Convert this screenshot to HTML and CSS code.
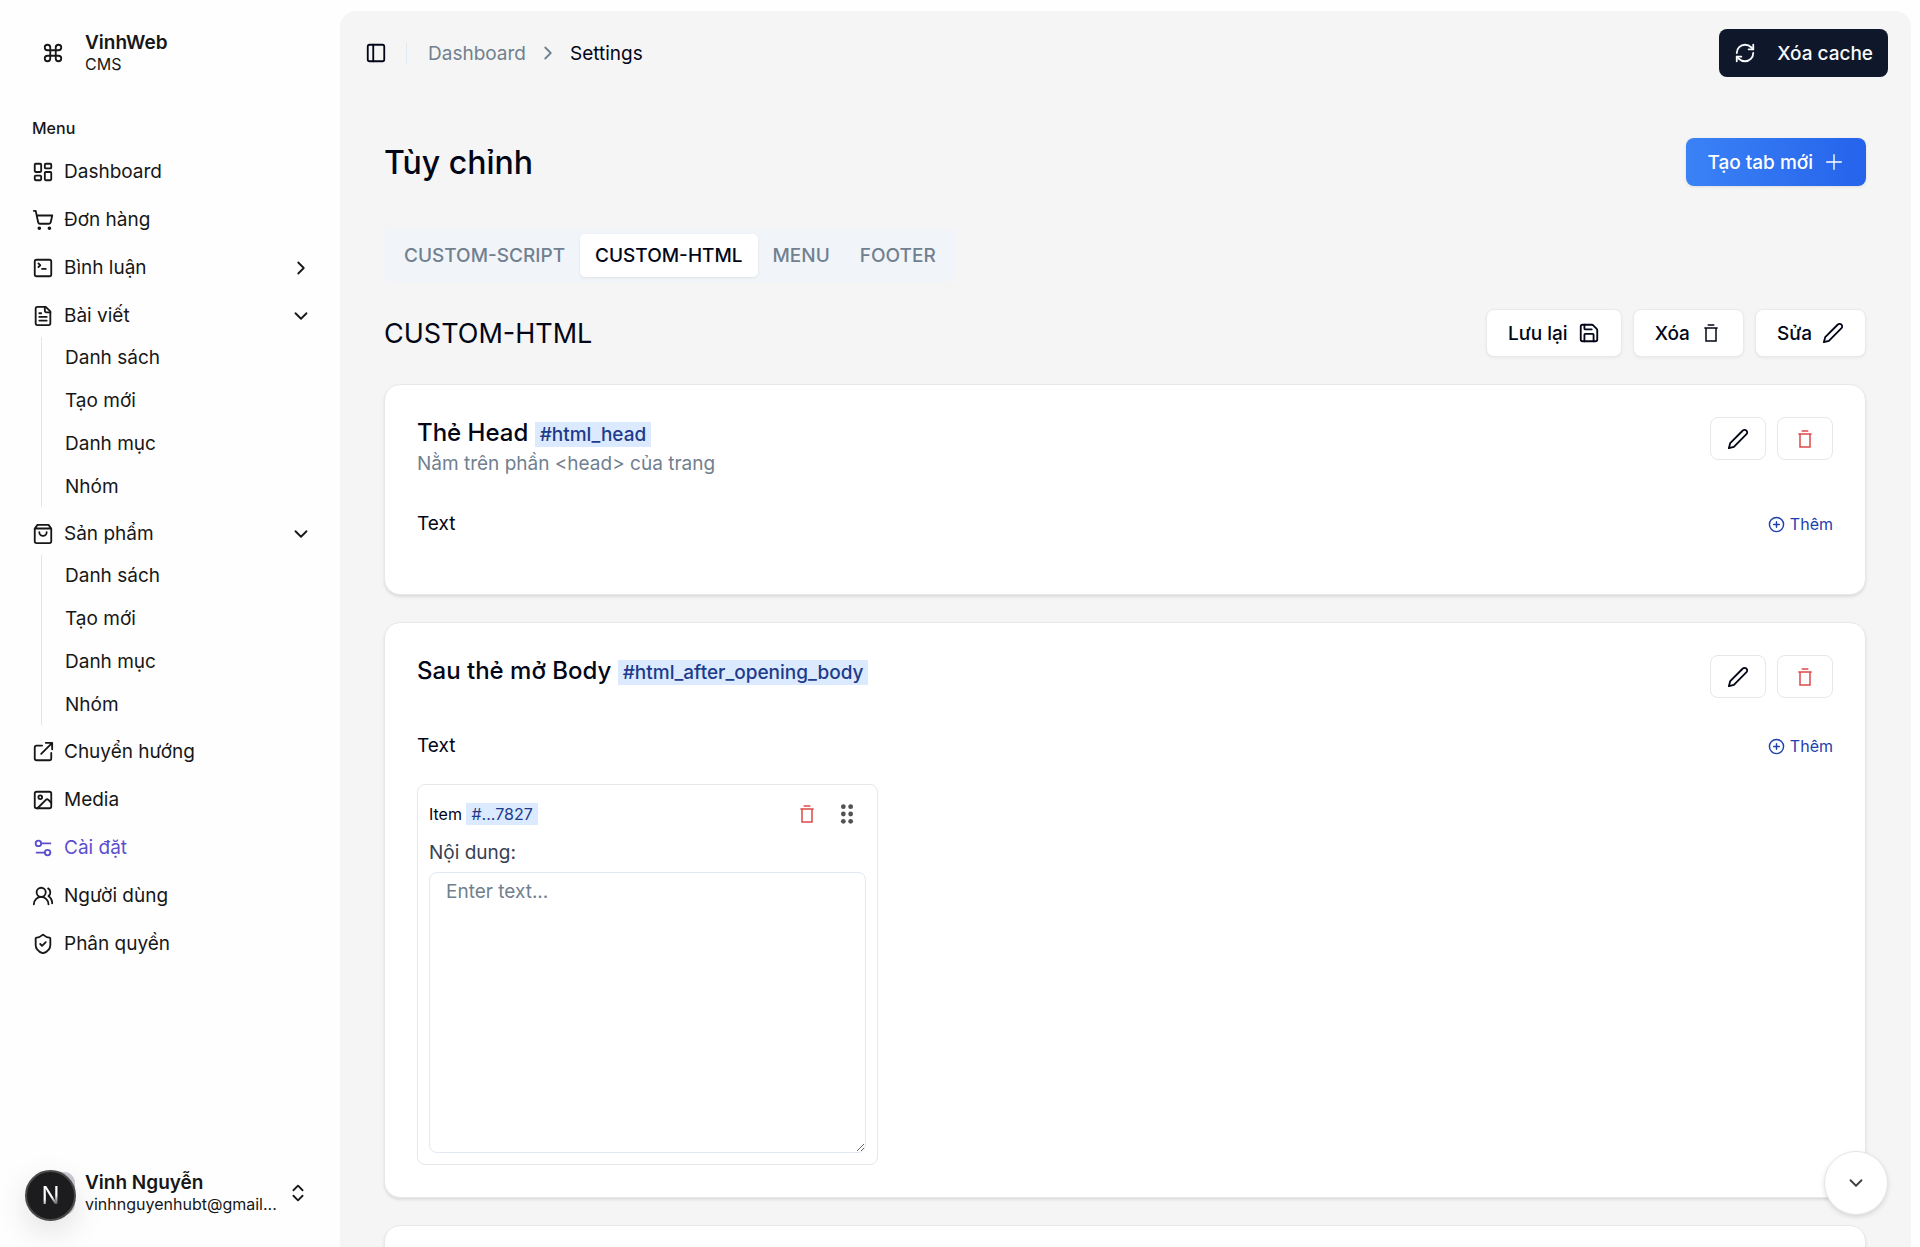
FILE: index.html
```html
<!DOCTYPE html>
<html lang="vi">
<head>
    <meta charset="UTF-8">
    <meta name="viewport" content="width=device-width, initial-scale=1.0">
    <title>VinhWeb CMS - Settings</title>
    <link rel="stylesheet" href="styles.css">
</head>
<body>
    <!-- shared icons -->
    <svg class="sprite" aria-hidden="true">
        <symbol id="i-right" viewBox="0 0 24 24"><path d="m9 18 6-6-6-6"/></symbol>
        <symbol id="i-down" viewBox="0 0 24 24"><path d="m6 9 6 6 6-6"/></symbol>
        <symbol id="i-pencil" viewBox="0 0 24 24"><path d="M17 3a2.85 2.83 0 1 1 4 4L7.500 20.500 2 22l1.500-5.500Z"/></symbol>
        <symbol id="i-trash" viewBox="0 0 24 24"><path d="M8 2.500h8M4 6h16M6 6v15.500h12V6"/></symbol>
        <symbol id="i-pluscircle" viewBox="0 0 24 24"><circle cx="12" cy="12" r="10"/><path d="M8 12h8M12 8v8"/></symbol>
    </svg>

    <div class="layout">
        <aside class="sidebar">
            <div class="brand">
                <svg class="icon brand-icon" viewBox="0 0 24 24"><path d="M15 6v12a3 3 0 1 0 3-3H6a3 3 0 1 0 3 3V6a3 3 0 1 0-3 3h12a3 3 0 1 0-3-3"/></svg>
                <div class="two-lines">
                    <strong>VinhWeb</strong>
                    <span>CMS</span>
                </div>
            </div>

            <nav class="menu">
                <p class="menu-label">Menu</p>
                <a href="#" class="menu-item">
                    <svg class="icon" viewBox="0 0 24 24"><rect x="3" y="3" width="7" height="9" rx="1"/><rect x="14" y="3" width="7" height="5" rx="1"/><rect x="14" y="12" width="7" height="9" rx="1"/><rect x="3" y="16" width="7" height="5" rx="1"/></svg>
                    <span>Dashboard</span>
                </a>
                <a href="#" class="menu-item">
                    <svg class="icon" viewBox="0 0 24 24"><circle cx="8" cy="21" r="1"/><circle cx="19" cy="21" r="1"/><path d="M2.050 2.050h2l2.660 12.420a2 2 0 0 0 2 1.580h9.780a2 2 0 0 0 1.950-1.570l1.650-7.430H5.120"/></svg>
                    <span>Đơn hàng</span>
                </a>
                <a href="#" class="menu-item">
                    <svg class="icon" viewBox="0 0 24 24"><path d="m7 11 2-2-2-2M11 13h4"/><rect x="3" y="3" width="18" height="18" rx="2"/></svg>
                    <span>Bình luận</span>
                    <svg class="icon arrow"><use href="#i-right"/></svg>
                </a>
                <a href="#" class="menu-item">
                    <svg class="icon" viewBox="0 0 24 24"><path d="M15 2H6a2 2 0 0 0-2 2v16a2 2 0 0 0 2 2h12a2 2 0 0 0 2-2V7Z"/><path d="M14 2v4a2 2 0 0 0 2 2h4M10 9H8M16 13H8M16 17H8"/></svg>
                    <span>Bài viết</span>
                    <svg class="icon arrow"><use href="#i-down"/></svg>
                </a>
                <div class="submenu">
                    <a href="#">Danh sách</a>
                    <a href="#">Tạo mới</a>
                    <a href="#">Danh mục</a>
                    <a href="#">Nhóm</a>
                </div>
                <a href="#" class="menu-item">
                    <svg class="icon" viewBox="0 0 24 24"><path d="M6 2 3 6v14a2 2 0 0 0 2 2h14a2 2 0 0 0 2-2V6l-3-4ZM3 6h18M16 10a4 4 0 0 1-8 0"/></svg>
                    <span>Sản phẩm</span>
                    <svg class="icon arrow"><use href="#i-down"/></svg>
                </a>
                <div class="submenu">
                    <a href="#">Danh sách</a>
                    <a href="#">Tạo mới</a>
                    <a href="#">Danh mục</a>
                    <a href="#">Nhóm</a>
                </div>
                <a href="#" class="menu-item">
                    <svg class="icon" viewBox="0 0 24 24"><path d="M21 13v6a2 2 0 0 1-2 2H5a2 2 0 0 1-2-2V7a2 2 0 0 1 2-2h6M15 2h7v7M21.500 2.500 10 14"/></svg>
                    <span>Chuyển hướng</span>
                </a>
                <a href="#" class="menu-item">
                    <svg class="icon" viewBox="0 0 24 24"><rect x="3" y="3" width="18" height="18" rx="2"/><circle cx="9" cy="9" r="2"/><path d="m21 15-3.086-3.086a2 2 0 0 0-2.828 0L6 21"/></svg>
                    <span>Media</span>
                </a>
                <a href="#" class="menu-item active">
                    <svg class="icon" viewBox="0 0 24 24"><path d="M20 7h-9M14 17H5"/><circle cx="17" cy="17" r="3"/><circle cx="7" cy="7" r="3"/></svg>
                    <span>Cài đặt</span>
                </a>
                <a href="#" class="menu-item">
                    <svg class="icon" viewBox="0 0 24 24"><path d="M18 21a8 8 0 0 0-16 0"/><circle cx="10" cy="8" r="5"/><path d="M22 20c0-3.370-2-6.500-4-8a5 5 0 0 0-.45-8.300"/></svg>
                    <span>Người dùng</span>
                </a>
                <a href="#" class="menu-item">
                    <svg class="icon" viewBox="0 0 24 24"><path d="M20 13c0 5-3.500 7.500-7.660 8.950a1 1 0 0 1-.67-.01C7.500 20.500 4 18 4 13V6a1 1 0 0 1 1-1c2 0 4.500-1.200 6.240-2.720a1.170 1.170 0 0 1 1.520 0C14.510 3.810 17 5 19 5a1 1 0 0 1 1 1z"/><path d="m9 12 2 2 4-4"/></svg>
                    <span>Phân quyền</span>
                </a>
            </nav>

            <div class="user">
                <div class="avatar"><div class="badge-n"><span>N</span></div></div>
                <div class="two-lines">
                    <strong>Vinh Nguyễn</strong>
                    <span>vinhnguyenhubt@gmail...</span>
                </div>
                <svg class="icon" viewBox="0 0 24 24"><path d="m7 15 5 5 5-5M7 9l5-5 5 5"/></svg>
            </div>
        </aside>

        <main class="panel">
            <header class="topbar">
                <button class="toggle" aria-label="Toggle sidebar">
                    <svg class="icon" viewBox="0 0 24 24"><rect x="3" y="3" width="18" height="18" rx="2"/><path d="M9 3v18"/></svg>
                </button>
                <nav class="breadcrumb">
                    <a href="#">Dashboard</a>
                    <svg class="icon"><use href="#i-right"/></svg>
                    <span>Settings</span>
                </nav>
                <button class="btn btn-dark">
                    <svg class="icon" viewBox="0 0 24 24"><path d="M3 12a9 9 0 0 1 9-9 9.750 9.750 0 0 1 6.740 2.740L21 8"/><path d="M21 3v5h-5M21 12a9 9 0 0 1-9 9 9.750 9.750 0 0 1-6.740-2.740L3 16"/><path d="M8 16H3v5"/></svg>
                    Xóa cache
                </button>
            </header>

            <div class="content">
                <div class="row">
                    <h1>Tùy chỉnh</h1>
                    <button class="btn btn-blue">
                        Tạo tab mới
                        <svg class="icon thin" viewBox="0 0 24 24"><path d="M4 12h16M12 4v16"/></svg>
                    </button>
                </div>

                <div class="tabs" role="tablist">
                    <button role="tab">CUSTOM-SCRIPT</button>
                    <button role="tab" class="active" aria-selected="true">CUSTOM-HTML</button>
                    <button role="tab">MENU</button>
                    <button role="tab">FOOTER</button>
                </div>

                <div class="row toolbar">
                    <h2>CUSTOM-HTML</h2>
                    <div class="actions">
                        <button class="btn btn-light">Lưu lại
                            <svg class="icon" viewBox="0 0 24 24"><path d="M15.200 3a2 2 0 0 1 1.400.6l3.800 3.800a2 2 0 0 1 .6 1.400V19a2 2 0 0 1-2 2H5a2 2 0 0 1-2-2V5a2 2 0 0 1 2-2z"/><path d="M17 21v-7a1 1 0 0 0-1-1H8a1 1 0 0 0-1 1v7M7 3v4a1 1 0 0 0 1 1h7"/></svg>
                        </button>
                        <button class="btn btn-light">Xóa
                            <svg class="icon trash"><use href="#i-trash"/></svg>
                        </button>
                        <button class="btn btn-light">Sửa
                            <svg class="icon"><use href="#i-pencil"/></svg>
                        </button>
                    </div>
                </div>

                <section class="card">
                    <div class="card-head">
                        <div>
                            <h3>Thẻ Head <code>#html_head</code></h3>
                            <p>Nằm trên phần &lt;head&gt; của trang</p>
                        </div>
                        <div class="actions">
                            <button class="btn-icon" aria-label="Sửa"><svg class="icon"><use href="#i-pencil"/></svg></button>
                            <button class="btn-icon danger" aria-label="Xóa"><svg class="icon trash"><use href="#i-trash"/></svg></button>
                        </div>
                    </div>
                    <div class="row field">
                        <h4>Text</h4>
                        <button class="add"><svg class="icon icon-sm"><use href="#i-pluscircle"/></svg>Thêm</button>
                    </div>
                    <div class="items"></div>
                </section>

                <section class="card">
                    <div class="card-head">
                        <div>
                            <h3>Sau thẻ mở Body <code>#html_after_opening_body</code></h3>
                        </div>
                        <div class="actions">
                            <button class="btn-icon" aria-label="Sửa"><svg class="icon"><use href="#i-pencil"/></svg></button>
                            <button class="btn-icon danger" aria-label="Xóa"><svg class="icon trash"><use href="#i-trash"/></svg></button>
                        </div>
                    </div>
                    <div class="row field">
                        <h4>Text</h4>
                        <button class="add"><svg class="icon icon-sm"><use href="#i-pluscircle"/></svg>Thêm</button>
                    </div>
                    <div class="items">
                        <div class="item">
                            <div class="item-head">
                                <span>Item <code>#...7827</code></span>
                                <div class="item-tools">
                                    <button class="plain danger" aria-label="Xóa item"><svg class="icon trash"><use href="#i-trash"/></svg></button>
                                    <button class="plain" aria-label="Di chuyển"><svg class="icon dots" viewBox="0 0 24 24"><circle cx="8" cy="4" r="2.600"/><circle cx="16" cy="4" r="2.600"/><circle cx="8" cy="12" r="2.600"/><circle cx="16" cy="12" r="2.600"/><circle cx="8" cy="20" r="2.600"/><circle cx="16" cy="20" r="2.600"/></svg></button>
                                </div>
                            </div>
                            <label for="content">Nội dung:</label>
                            <textarea id="content" placeholder="Enter text..."></textarea>
                        </div>
                    </div>
                </section>

                <section class="card">
                    <div class="card-head"></div>
                </section>
            </div>
        </main>
    </div>

    <button class="scroll-down" aria-label="Cuộn xuống"><svg class="icon"><use href="#i-down"/></svg></button>
</body>
</html>
```
FILE: styles.css
```css
*{
    box-sizing: border-box;
}

body{
    margin: 0;
    font-family: Inter, "Noto Sans", sans-serif;
    font-size: 19px;
    line-height: 27px;
    color: #020617;
    background-color: #fefefe;
}

h1, h2, h3, h4, p{
    margin: 0;
    font-weight: 400;
}

a{
    color: inherit;
    text-decoration: none;
}

button{
    font: inherit;
    color: inherit;
    border: none;
    background: none;
    padding: 0;
    cursor: pointer;
}

.sprite{
    display: none;
}

.icon{
    width: 22px;
    height: 22px;
    flex-shrink: 0;
    fill: none;
    stroke: currentColor;
    stroke-width: 2;
    stroke-linecap: round;
    stroke-linejoin: round;
}
.icon-sm{
    width: 17px;
    height: 17px;
}
.thin{
    stroke-width: 1.5;
}
.trash{
    stroke-width: 1.8;
    stroke-linecap: butt;
    stroke-linejoin: miter;
    height: 20px;
}
.dots{
    fill: #525252;
    stroke: none;
}

.layout{
    display: flex;
    height: 100vh;
    overflow: hidden;
}

/* sidebar */
.sidebar{
    width: 340px;
    flex-shrink: 0;
    display: flex;
    flex-direction: column;
    color: #171717;
}

.brand{
    display: flex;
    align-items: center;
    gap: 21px;
    padding: 31px 32px 0 42px;
}

.two-lines{
    display: flex;
    flex-direction: column;
    flex: 1;
    min-width: 0;
    font-size: 16px;
    line-height: 21px;
    white-space: nowrap;
}
.two-lines strong{
    font-size: 19px;
    line-height: 23px;
    font-weight: 600;
}

.menu{
    flex: 1;
    display: flex;
    flex-direction: column;
    gap: 5px;
    padding: 32px 21px 0;
}
.menu-label{
    height: 38px;
    padding-left: 11px;
    font-size: 16px;
    line-height: 42px;
    font-weight: 500;
}
.menu-item{
    display: flex;
    align-items: center;
    gap: 10px;
    height: 43px;
    padding: 0 7px 0 11px;
}
.menu-item .arrow{
    margin-left: auto;
}
.menu-item.active{
    color: #5b4fcf;
}
.submenu{
    display: flex;
    flex-direction: column;
    gap: 6px;
    margin: -5px 0 0 20px;
    padding: 2px 0 2px 23px;
    border-left: 1px solid #e5e5e5;
}
.submenu a{
    line-height: 37px;
}

.user{
    display: flex;
    align-items: center;
    gap: 10px;
    padding: 0 31px 32px 32px;
}
.avatar{
    position: relative;
    width: 43px;
    height: 43px;
    border-radius: 11px;
    background-color: #c9c9d1;
}
/* round mark over the avatar */
.badge-n{
    position: absolute;
    top: -2px;
    left: -7px;
    width: 51px;
    height: 51px;
    border-radius: 50%;
    border: 2px solid #4a4a4a;
    background-color: #1c1c1e;
    font-size: 24px;
    line-height: 47px;
    text-align: center;
    box-shadow: 0 11px 32px rgba(0, 0, 0, 0.12);
}
.badge-n span{
    background-image: linear-gradient(160deg, #fff 55%, #555 80%);
    background-clip: text;
    color: transparent;
}

/* main panel */
.panel{
    flex: 1;
    min-width: 0;
    margin: 11px 9px 0 0;
    background-color: #f5f5f5;
    border-radius: 16px 16px 0 0;
    overflow: auto;
    scrollbar-width: none;
}

.topbar{
    display: flex;
    align-items: center;
    height: 84px;
    padding: 0 23px 0 25px;
}
.toggle{
    display: flex;
}
.breadcrumb{
    display: flex;
    align-items: center;
    gap: 11px;
    height: 21px;
    margin-left: 19px;
    padding-left: 21px;
    border-left: 1px solid #e2e8f0;
}
.breadcrumb a,
.breadcrumb svg{
    color: #71808f;
}

.btn{
    display: flex;
    align-items: center;
    gap: 10px;
    height: 48px;
    padding: 0 21px;
    border-radius: 8px;
    font-weight: 500;
}
.btn-dark{
    gap: 21px;
    margin-left: auto;
    padding: 0 15px;
    background-color: #0f172a;
    color: #f8fafc;
}
.btn-blue{
    background-image: linear-gradient(to right, #3b82f6, #2563eb);
    color: #fff;
    box-shadow: 0 1px 3px rgba(0, 0, 0, 0.1);
}
.btn-light{
    background-color: #fff;
    border: 1px solid #e8eaee;
    box-shadow: 0 1px 3px rgba(0, 0, 0, 0.06);
}

.content{
    padding: 43px 45px 43px 44px;
}

.row{
    display: flex;
    align-items: center;
    justify-content: space-between;
}
h1{
    font-size: 32px;
    line-height: 43px;
    font-weight: 500;
}
h2{
    font-size: 27px;
    line-height: 37px;
}

.tabs{
    display: inline-flex;
    margin-top: 43px;
    padding: 5px;
    border-radius: 8px;
    background-color: #f1f5f9;
    vertical-align: top;
}
.tabs button{
    height: 43px;
    padding: 0 15px;
    border-radius: 5px;
    font-weight: 500;
    color: #71808f;
}
.tabs .active{
    background-color: #fff;
    color: #020617;
    box-shadow: 0 1px 3px rgba(0, 0, 0, 0.08);
}

.toolbar{
    margin-top: 27px;
}
.actions{
    display: flex;
    gap: 11px;
}

/* cards */
.card{
    margin-top: 27px;
    padding: 32px;
    border: 1px solid #e8e8e8;
    border-radius: 16px;
    background-color: #fff;
    box-shadow: 0 2px 3px rgba(0, 0, 0, 0.1);
}
.card-head{
    display: flex;
    align-items: flex-start;
    justify-content: space-between;
    min-height: 44px;
}
.card-head p{
    color: #71808f;
}
h3{
    font-size: 24px;
    line-height: 31px;
    font-weight: 500;
}
code{
    padding: 1px 5px;
    font-family: inherit;
    font-size: 19px;
    background-color: #dbeafe;
    color: #1e3a8a;
}
.btn-icon{
    display: flex;
    align-items: center;
    justify-content: center;
    width: 56px;
    height: 43px;
    border: 1px solid #e5e7eb;
    border-radius: 8px;
    background-color: #fff;
}
.danger{
    color: #dc4a4a;
}
.field{
    margin-top: 33px;
}
h4{
    font-size: 19px;
    line-height: 28px;
}
.add{
    display: flex;
    align-items: center;
    gap: 5px;
    font-size: 16px;
    line-height: 24px;
    color: #1e40af;
}

.items{
    display: grid;
    grid-template-columns: repeat(3, 1fr);
    gap: 16px;
    margin-top: 24px;
}
.item{
    display: flex;
    flex-direction: column;
    padding: 11px;
    border: 1px solid #e5e7eb;
    border-radius: 8px;
}
.item-head{
    display: flex;
    align-items: center;
    justify-content: space-between;
    height: 36px;
    font-size: 16px;
}
.item-head code{
    font-size: 16px;
}
.item-tools{
    display: flex;
    gap: 18px;
    padding-right: 8px;
}
.plain{
    display: flex;
    align-items: center;
}
.item label{
    margin: 7px 0 6px;
    color: #374151;
}
textarea{
    height: 281px;
    padding: 5px 16px;
    border: 1px solid #e2e8f0;
    border-radius: 8px;
    font: inherit;
    color: inherit;
    background-color: #fff;
}
textarea::placeholder{
    color: #71808f;
}

.scroll-down{
    position: fixed;
    right: 32px;
    bottom: 32px;
    display: flex;
    align-items: center;
    justify-content: center;
    width: 64px;
    height: 64px;
    border: 1px solid #e5e5e5;
    border-radius: 50%;
    background-color: #fff;
    color: #404040;
    box-shadow: 0 2px 5px rgba(0, 0, 0, 0.12);
}
```
